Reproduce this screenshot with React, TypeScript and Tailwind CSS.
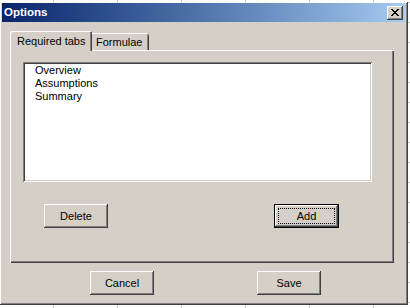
import React from "react"

const bevel =
  "shadow-[inset_-1px_-1px_#404040,inset_1px_1px_#ffffff,inset_-2px_-2px_#808080,inset_2px_2px_#d4d0c8]"

const ClassicButton: React.FC<{ label: string; isDefault?: boolean }> = ({ label, isDefault }) => {
  if (isDefault) {
    return (
      <button className="w-[65px] h-[24px] border border-black bg-[#d4d0c8] p-0">
        <div className={`w-full h-full flex items-center justify-center ${bevel} p-[3px]`}>
          <div className="w-full h-full flex items-center justify-center border border-dotted border-black">
            {label}
          </div>
        </div>
      </button>
    )
  }
  return (
    <button className={`w-[64px] h-[24px] bg-[#d4d0c8] flex items-center justify-center ${bevel}`}>
      {label}
    </button>
  )
}

export default function App() {
  const items = ["Overview", "Assumptions", "Summary"]
  return (
    <div className="w-[410px] h-[308px] overflow-hidden bg-white bg-[linear-gradient(to_right,#c6c6c6_1px,transparent_1px),linear-gradient(to_bottom,#c6c6c6_1px,transparent_1px)] bg-[size:64px_20px] bg-[position:53px_2px] font-['Liberation_Sans',Arial,sans-serif] text-[11px] text-black">
      <div className="mt-[2px] w-[408px] h-[303px] bg-[#d4d0c8] pt-[1px] pl-[2px] pr-[3px] shadow-[inset_-1px_-1px_#404040,inset_1px_1px_#ffffff,inset_-2px_-2px_#808080]">
        {/* title bar */}
        <div className="h-[19px] flex items-center justify-between bg-gradient-to-r from-[#0a246a] to-[#a6caf0] pl-[2px] pr-[2px]">
          <span className="font-bold text-white text-[11.5px] leading-none">Options</span>
          <button className={`w-[16px] h-[14px] bg-[#d4d0c8] flex items-center justify-center ${bevel}`}>
            <svg width="8" height="7" viewBox="0 0 8 7" shapeRendering="crispEdges">
              <path d="M0 0h2v1H0zM6 0h2v1H6zM1 1h2v1H1zM5 1h2v1H5zM2 2h4v1H2zM3 3h2v1H3zM2 4h4v1H2zM1 5h2v1H1zM5 5h2v1H5zM0 6h2v1H0zM6 6h2v1H6z" fill="#000" />
            </svg>
          </button>
        </div>

        {/* tabs */}
        <div className="pl-[8px] pt-[9px]">
          <div className="flex items-end h-[19px]">
            <div className="relative z-10 -mb-[1px] h-[20px] w-[82px] bg-[#d4d0c8] rounded-tl-[2px] rounded-tr-[2px] shadow-[inset_1px_1px_#ffffff,inset_-1px_0_#404040,inset_-2px_0_#808080] pl-[7px] pt-[4px] leading-[13px]">
              Required tabs
            </div>
            <div className="h-[17px] w-[57px] bg-[#d4d0c8] rounded-tr-[2px] shadow-[inset_0_1px_#ffffff,inset_-1px_0_#404040,inset_-2px_0_#808080] pl-[4px] pt-[3px] leading-[13px]">
              Formulae
            </div>
          </div>

          {/* tab panel */}
          <div className="w-[384px] h-[213px] bg-[#d4d0c8] shadow-[inset_1px_1px_#ffffff,inset_-1px_-1px_#404040,inset_-2px_-2px_#808080] pt-[12px] pl-[13px]">
            <div className="w-[349px] h-[120px] bg-white shadow-[inset_1px_1px_#808080,inset_-1px_-1px_#ffffff,inset_2px_2px_#404040,inset_-2px_-2px_#d4d0c8] pt-[2px] pl-[12px]">
              {items.map((it) => (
                <div key={it} className="h-[13px] leading-[13px]">
                  {it}
                </div>
              ))}
            </div>
            <div className="flex justify-between pl-[21px] pr-[55px] pt-[22px]">
              <ClassicButton label="Delete" />
              <ClassicButton label="Add" isDefault />
            </div>
          </div>
        </div>

        {/* bottom buttons */}
        <div className="flex pt-[8px] pl-[88px] gap-[103px]">
          <ClassicButton label="Cancel" />
          <ClassicButton label="Save" />
        </div>
      </div>
    </div>
  )
}
